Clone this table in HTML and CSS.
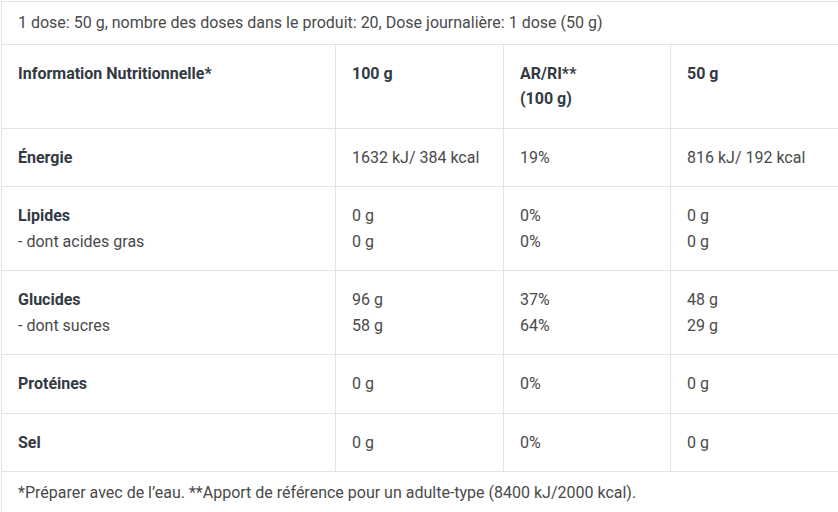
FILE: index.html
```html
<!DOCTYPE html>
<html lang="fr">
<head>
<meta charset="utf-8">
<title>Information Nutritionnelle</title>
<link rel="stylesheet" href="styles.css">
</head>
<body>
<table class="nutri">
  <colgroup>
    <col class="c1"><col class="c2"><col class="c3"><col class="c4">
  </colgroup>
  <tbody>
    <tr class="note-row"><td colspan="4">1 dose: 50 g, nombre des doses dans le produit: 20, Dose journalière: 1 dose (50 g)</td></tr>
    <tr class="head-row">
      <th>Information Nutritionnelle*</th>
      <th>100 g</th>
      <th>AR/RI**<br>(100 g)</th>
      <th>50 g</th>
    </tr>
    <tr>
      <td><strong>Énergie</strong></td>
      <td>1632 kJ/ 384 kcal</td>
      <td>19%</td>
      <td>816 kJ/ 192 kcal</td>
    </tr>
    <tr>
      <td><strong>Lipides</strong><br>- dont acides gras</td>
      <td>0 g<br>0 g</td>
      <td>0%<br>0%</td>
      <td>0 g<br>0 g</td>
    </tr>
    <tr>
      <td><strong>Glucides</strong><br>- dont sucres</td>
      <td>96 g<br>58 g</td>
      <td>37%<br>64%</td>
      <td>48 g<br>29 g</td>
    </tr>
    <tr>
      <td><strong>Protéines</strong></td>
      <td>0 g</td>
      <td>0%</td>
      <td>0 g</td>
    </tr>
    <tr>
      <td><strong>Sel</strong></td>
      <td>0 g</td>
      <td>0%</td>
      <td>0 g</td>
    </tr>
    <tr class="note-row"><td colspan="4">*Préparer avec de l’eau. **Apport de référence pour un adulte-type (8400 kJ/2000 kcal).</td></tr>
  </tbody>
</table>
</body>
</html>
```

FILE: styles.css
```css
html, body {
  background: #ffffff;
}
body {
  margin: 1px 0 0 1px;
  font-family: Roboto, "Liberation Sans", Arial, sans-serif;
  font-size: 16px;
  line-height: 25.5px;
  color: #4a4a4a;
}
.nutri {
  border-collapse: collapse;
  table-layout: fixed;
  width: 839px;
}
.c1 { width: 334px; }
.c2 { width: 168px; }
.c3 { width: 167px; }
.c4 { width: 170px; }
.nutri td, .nutri th {
  border: 1px solid #e3e3e3;
  padding: 16px;
  text-align: left;
  vertical-align: top;
  font-weight: 400;
}
.nutri th, .nutri strong {
  font-weight: 700;
  color: #333a42;
}
.note-row td {
  padding-top: 8px;
  padding-bottom: 8px;
}
```
